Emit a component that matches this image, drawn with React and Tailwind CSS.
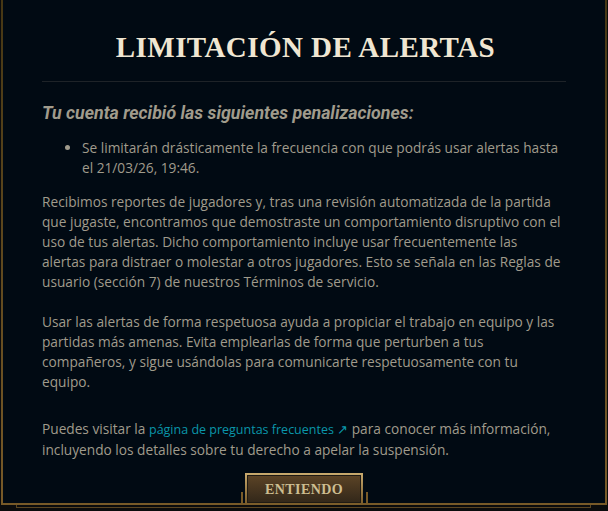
export default function App() {
  const body = "text-[#a09b8c] text-[13.7px] leading-[20px] font-['Open_Sans',sans-serif]";
  return (
    <div className="relative w-[608px] h-[511px] overflow-hidden bg-[#0b0c0d]">
      <div className="ml-[1px] w-[606px] h-[505px] bg-linear-to-b from-[#463714] to-[#785a28] px-[2px] pb-[2px]">
        <div className="h-full bg-[#010a13] flex flex-col pl-[39px] pr-[36px]">
          <h1 className="pt-[30px] text-center text-[#f0e6d2] text-[29px] leading-[34px] font-bold tracking-[0.015em] font-['Liberation_Serif',serif]">
            LIMITACIÓN DE ALERTAS
          </h1>
          <div className="mt-[17px] mr-[3px] h-px bg-[#1e2328]" />
          <h2 className="mt-[20px] text-[#a09b8c] text-[17.8px] leading-[22px] font-bold italic font-['Roboto',sans-serif]">
            Tu cuenta recibió las siguientes penalizaciones:
          </h2>
          <ul className={`mt-[14px] pl-[40px] list-disc ${body}`}>
            <li>Se limitarán drásticamente la frecuencia con que podrás usar alertas hasta<br />el 21/03/26, 19:46.</li>
          </ul>
          <p className={`mt-[14px] ${body}`}>
            Recibimos reportes de jugadores y, tras una revisión automatizada de la partida<br />
            que jugaste, encontramos que demostraste un comportamiento disruptivo con el<br />
            uso de tus alertas. Dicho comportamiento incluye usar frecuentemente las<br />
            alertas para distraer o molestar a otros jugadores. Esto se señala en las Reglas de<br />
            usuario (sección 7) de nuestros Términos de servicio.
          </p>
          <p className={`mt-[20px] ${body}`}>
            Usar las alertas de forma respetuosa ayuda a propiciar el trabajo en equipo y las partidas más amenas. Evita emplearlas de forma que perturben a tus compañeros, y sigue usándolas para comunicarte respetuosamente con tu equipo.
          </p>
          <p className={`mt-[27px] ${body}`}>
            Puedes visitar la <span className="text-[#0a96aa] text-[12.5px]">página de preguntas frecuentes ↗</span> para conocer más información, incluyendo los detalles sobre tu derecho a apelar la suspensión.
          </p>
        </div>
      </div>
      <div className="absolute left-[16px] top-[505px] w-[575px] h-[3px] border-x border-b border-[#5a4522]" />
      <div className="absolute left-[241px] top-[492px] w-[127px] h-[12px] border-x-2 border-[#785a28]" />
      <div className="absolute left-[245px] top-[473px] w-[118px] h-[32px] p-[2px] bg-linear-to-b from-[#c8aa6e] to-[#785a28]">
        <div className="h-full border border-[#1e1a14] bg-linear-to-b from-[#5b4325] to-[#33281a] flex items-center justify-center">
          <span className="text-[#cdbe91] text-[14px] font-bold tracking-[0.03em] font-['Liberation_Serif',serif]">ENTIENDO</span>
        </div>
      </div>
    </div>
  );
}
